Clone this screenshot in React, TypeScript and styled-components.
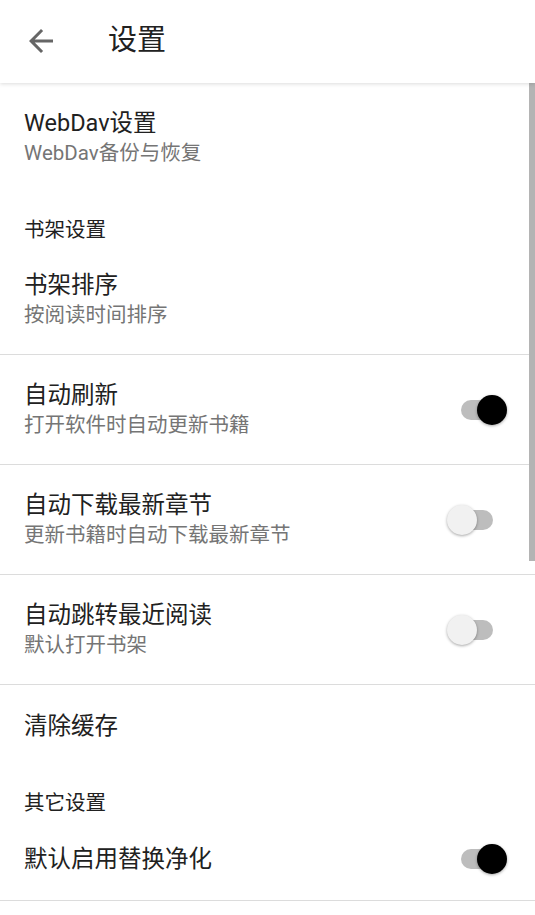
import * as React from "react";
import styled, { createGlobalStyle } from "styled-components";

const GlobalStyle = createGlobalStyle`
  html, body {
    margin: 0;
    padding: 0;
    background: #ffffff;
  }
  body {
    font-family: Roboto, "Noto Sans CJK SC", "Noto Sans", sans-serif;
    color: #212121;
  }
`;

const Page = styled.div`
  position: relative;
  width: 535px;
  height: 915px;
  overflow: hidden;
  background: #fff;
`;

const Toolbar = styled.header`
  position: relative;
  z-index: 2;
  display: flex;
  align-items: center;
  height: 83px;
  padding-left: 23px;
  background: #fff;
  box-shadow: 0 1px 4px rgba(0, 0, 0, 0.14);
`;

const BackButton = styled.button`
  display: flex;
  align-items: center;
  justify-content: center;
  width: 36px;
  height: 36px;
  margin-top: -2px;
  padding: 0;
  border: none;
  background: none;
`;

const Title = styled.h1`
  margin: -4px 0 0 49px;
  font-size: 29px;
  font-weight: 400;
  line-height: 36px;
  color: #212121;
`;

const List = styled.div`
  display: flex;
  flex-direction: column;
`;

const Row = styled.div<{ $h: number; $divider?: boolean }>`
  display: flex;
  align-items: center;
  box-sizing: border-box;
  height: ${(p) => p.$h}px;
  padding: 0 28px 0 24px;
  border-bottom: ${(p) => (p.$divider ? "1px solid #dcdcdc" : "none")};
`;

const Texts = styled.div`
  flex: 1;
  display: flex;
  flex-direction: column;
`;

const ItemTitle = styled.div`
  font-size: 23.5px;
  line-height: 30px;
  color: #212121;
`;

const ItemSummary = styled.div`
  font-size: 20.5px;
  line-height: 30px;
  color: #757575;
`;

const Category = styled.div`
  box-sizing: border-box;
  height: 52px;
  padding: 25px 24px 0;
  font-size: 20.5px;
  line-height: 24px;
  color: #212121;
`;

const Switch = styled.div`
  position: relative;
  width: 60px;
  height: 30px;
  flex: none;
`;

const Track = styled.div`
  position: absolute;
  left: 14px;
  top: 5px;
  width: 32px;
  height: 20px;
  border-radius: 10px;
  background: #bdbdbd;
`;

const Thumb = styled.div<{ $on: boolean }>`
  position: absolute;
  top: 0;
  left: ${(p) => (p.$on ? "30px" : "0")};
  width: 30px;
  height: 30px;
  border-radius: 50%;
  background: ${(p) => (p.$on ? "#000" : "#f1f1f1")};
  box-shadow: 0 1px 3px rgba(0, 0, 0, 0.35);
`;

const Scrollbar = styled.div`
  position: absolute;
  right: 0;
  top: 83px;
  width: 6px;
  height: 478px;
  background: #b4b4b4;
`;

const Toggle = ({ on }: { on: boolean }) => (
  <Switch>
    <Track />
    <Thumb $on={on} />
  </Switch>
);

interface ItemProps {
  title: string;
  summary?: string;
  toggle?: boolean;
  h: number;
  divider?: boolean;
}

const Item: React.FC<ItemProps> = ({ title, summary, toggle, h, divider }) => (
  <Row $h={h} $divider={divider}>
    <Texts>
      <ItemTitle>{title}</ItemTitle>
      {summary && <ItemSummary>{summary}</ItemSummary>}
    </Texts>
    {toggle !== undefined && <Toggle on={toggle} />}
  </Row>
);

export default function App() {
  return (
    <Page>
      <GlobalStyle />
      <Toolbar>
        <BackButton aria-label="back">
          <svg width="36" height="36" viewBox="0 0 24 24">
            <path
              fill="#666"
              d="M20 11H7.83l5.59-5.59L12 4l-8 8 8 8 1.41-1.41L7.83 13H20v-2z"
            />
          </svg>
        </BackButton>
        <Title>设置</Title>
      </Toolbar>
      <List>
        <Item h={110} title="WebDav设置" summary="WebDav备份与恢复" />
        <Category>书架设置</Category>
        <Item h={110} divider title="书架排序" summary="按阅读时间排序" />
        <Item h={110} divider title="自动刷新" summary="打开软件时自动更新书籍" toggle={true} />
        <Item h={110} divider title="自动下载最新章节" summary="更新书籍时自动下载最新章节" toggle={false} />
        <Item h={110} divider title="自动跳转最近阅读" summary="默认打开书架" toggle={false} />
        <Item h={81} title="清除缓存" />
        <Category>其它设置</Category>
        <Item h={83} divider title="默认启用替换净化" toggle={true} />
      </List>
      <Scrollbar />
    </Page>
  );
}
